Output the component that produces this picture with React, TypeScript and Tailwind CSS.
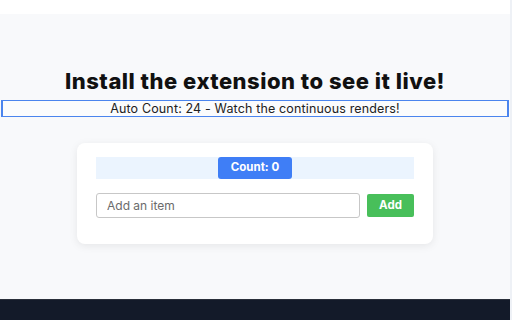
export default function App() {
  return (
    <div className="flex h-[320px] w-[512px] overflow-hidden bg-[#eef1f6] font-['Inter','Liberation_Sans',Arial,sans-serif]">
      <div className="flex w-[510px] flex-col">
        {/* top strip */}
        <div className="h-[14px] bg-white" />

        <main className="flex flex-1 flex-col bg-[#f8f9fb]">
          <h1 className="mt-[55px] text-center text-[22px] font-extrabold leading-[24px] tracking-[0.5px] text-[#111111]">
            Install the extension to see it live!
          </h1>

          <div className="mx-px mt-[7px] border border-x-2 border-[#4b85ee] bg-[#fbfcfd] py-px text-center text-[12.5px] leading-[13px] tracking-[0.15px] text-[#222222]">
            Auto Count: 24 - Watch the continuous renders!
          </div>

          <div className="mx-auto mt-[26px] w-[356px] rounded-[8px] bg-white px-[19px] pt-[14px] pb-[26px] shadow-[0_2px_8px_rgba(0,0,0,0.08)]">
            <div className="flex h-[22px] justify-center bg-[#ebf4fe]">
              <button className="w-[74px] rounded-[3px] bg-[#3f7ef6] text-[11.5px] font-bold text-white">
                Count: 0
              </button>
            </div>

            <div className="mt-[14px] flex items-center gap-[7px]">
              <input
                placeholder="Add an item"
                className="h-[25px] flex-1 rounded-[3px] border border-[#c7c7c7] px-[10px] text-[12px] placeholder:text-[#6b6b6b] outline-none"
              />
              <button className="h-[23px] w-[47px] rounded-[2px] bg-[#48bf5a] text-[11.5px] font-bold text-white">
                Add
              </button>
            </div>
          </div>
        </main>

        {/* dark footer */}
        <div className="h-[21px] border-t border-[#2a2f3a] bg-[#131a29]" />
      </div>
    </div>
  );
}
